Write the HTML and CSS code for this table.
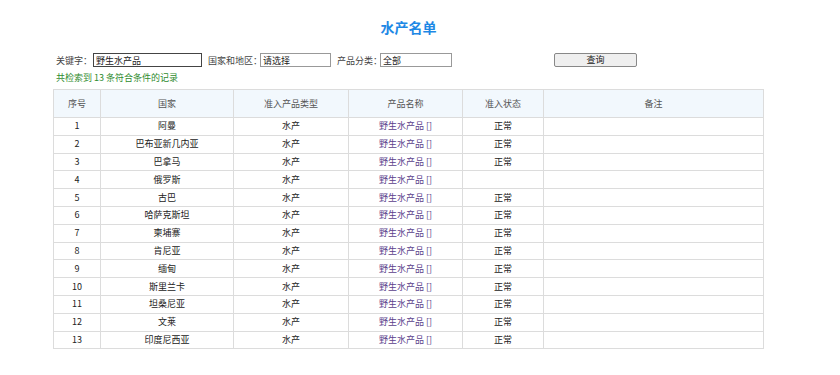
FILE: index.html
```html
<!DOCTYPE html>
<html lang="zh-CN">
<head>
    <meta charset="UTF-8">
    <meta name="viewport" content="width=device-width, initial-scale=1.0">
    <title>水产名单</title>
    <link rel="stylesheet" href="styles.css">
</head>
<body>

    <h1 class="page-title">水产名单</h1>

    <form class="search-bar">
        <label>关键字：</label>
        <input type="text" class="field field-key" value="野生水产品">
        <label>国家和地区：</label>
        <input type="text" class="field field-country" value="请选择">
        <label>产品分类：</label>
        <input type="text" class="field field-cat" value="全部">
        <button type="button" class="btn-search">查询</button>
    </form>

    <p class="result-count">共检索到 13 条符合条件的记录</p>

    <table class="list-table">
        <thead>
            <tr>
                <th class="c-no">序号</th>
                <th class="c-country">国家</th>
                <th class="c-type">准入产品类型</th>
                <th class="c-name">产品名称</th>
                <th class="c-state">准入状态</th>
                <th>备注</th>
            </tr>
        </thead>
        <tbody>
            <tr><td>1</td><td>阿曼</td><td>水产</td><td class="prod">野生水产品 []</td><td>正常</td><td></td></tr>
            <tr><td>2</td><td>巴布亚新几内亚</td><td>水产</td><td class="prod">野生水产品 []</td><td>正常</td><td></td></tr>
            <tr><td>3</td><td>巴拿马</td><td>水产</td><td class="prod">野生水产品 []</td><td>正常</td><td></td></tr>
            <tr><td>4</td><td>俄罗斯</td><td>水产</td><td class="prod">野生水产品 []</td><td></td><td></td></tr>
            <tr><td>5</td><td>古巴</td><td>水产</td><td class="prod">野生水产品 []</td><td>正常</td><td></td></tr>
            <tr><td>6</td><td>哈萨克斯坦</td><td>水产</td><td class="prod">野生水产品 []</td><td>正常</td><td></td></tr>
            <tr><td>7</td><td>柬埔寨</td><td>水产</td><td class="prod">野生水产品 []</td><td>正常</td><td></td></tr>
            <tr><td>8</td><td>肯尼亚</td><td>水产</td><td class="prod">野生水产品 []</td><td>正常</td><td></td></tr>
            <tr><td>9</td><td>缅甸</td><td>水产</td><td class="prod">野生水产品 []</td><td>正常</td><td></td></tr>
            <tr><td>10</td><td>斯里兰卡</td><td>水产</td><td class="prod">野生水产品 []</td><td>正常</td><td></td></tr>
            <tr><td>11</td><td>坦桑尼亚</td><td>水产</td><td class="prod">野生水产品 []</td><td>正常</td><td></td></tr>
            <tr><td>12</td><td>文莱</td><td>水产</td><td class="prod">野生水产品 []</td><td>正常</td><td></td></tr>
            <tr><td>13</td><td>印度尼西亚</td><td>水产</td><td class="prod">野生水产品 []</td><td>正常</td><td></td></tr>
        </tbody>
    </table>

</body>
</html>
```

FILE: styles.css
```css
body {
    font-family: "Noto Sans CJK SC", "Noto Sans", sans-serif;
    font-size: 9px;
    color: #333;
    background: #fff;
    margin: 0;
    padding: 17px 0 0 53px;
    width: 711px;
}

.page-title {
    margin: 0;
    height: 36px;
    line-height: 20px;
    text-align: center;
    font-size: 14px;
    font-weight: bold;
    color: #1e88e5;
}

.search-bar {
    display: flex;
    align-items: center;
    height: 14px;
    margin: 0;
    padding-left: 3px;
}

.search-bar label {
    color: #444;
    margin-right: -2px;
}

.field {
    height: 14px;
    box-sizing: border-box;
    border: 1px solid #999;
    padding: 0 2px;
    font-family: inherit;
    font-size: 9px;
    color: #222;
    margin-right: 6px;
    outline: none;
}

.field-key {
    width: 109px;
    border: 1px solid #444;
    margin-left: 3px;
}

.field-country {
    width: 71px;
}

.field-cat {
    width: 72px;
}

.btn-search {
    margin-left: 96px;
    width: 83px;
    height: 14px;
    padding: 0;
    border: 1px solid #888;
    border-radius: 2px;
    background: #efefef;
    font-family: inherit;
    font-size: 9px;
    line-height: 12px;
    color: #222;
}

.result-count {
    margin: 4px 0 4px 3px;
    color: #2e8b2e;
    line-height: 14px;
}

.list-table {
    width: 711px;
    border-collapse: collapse;
    border: 1px solid #d6d6d6;
    table-layout: fixed;
}

.list-table th,
.list-table td {
    border: 1px solid #dcdcdc;
    text-align: center;
    padding: 0;
    font-weight: normal;
}

.list-table th {
    height: 27px;
    background: #f2f8fd;
    color: #555;
}

.list-table td {
    height: 16.8px;
    line-height: 16px;
    color: #222;
}

.list-table .prod {
    color: #5b3f8c;
}

.c-no { width: 46px; }
.c-country { width: 132px; }
.c-type { width: 114px; }
.c-name { width: 113px; }
.c-state { width: 80px; }
```
